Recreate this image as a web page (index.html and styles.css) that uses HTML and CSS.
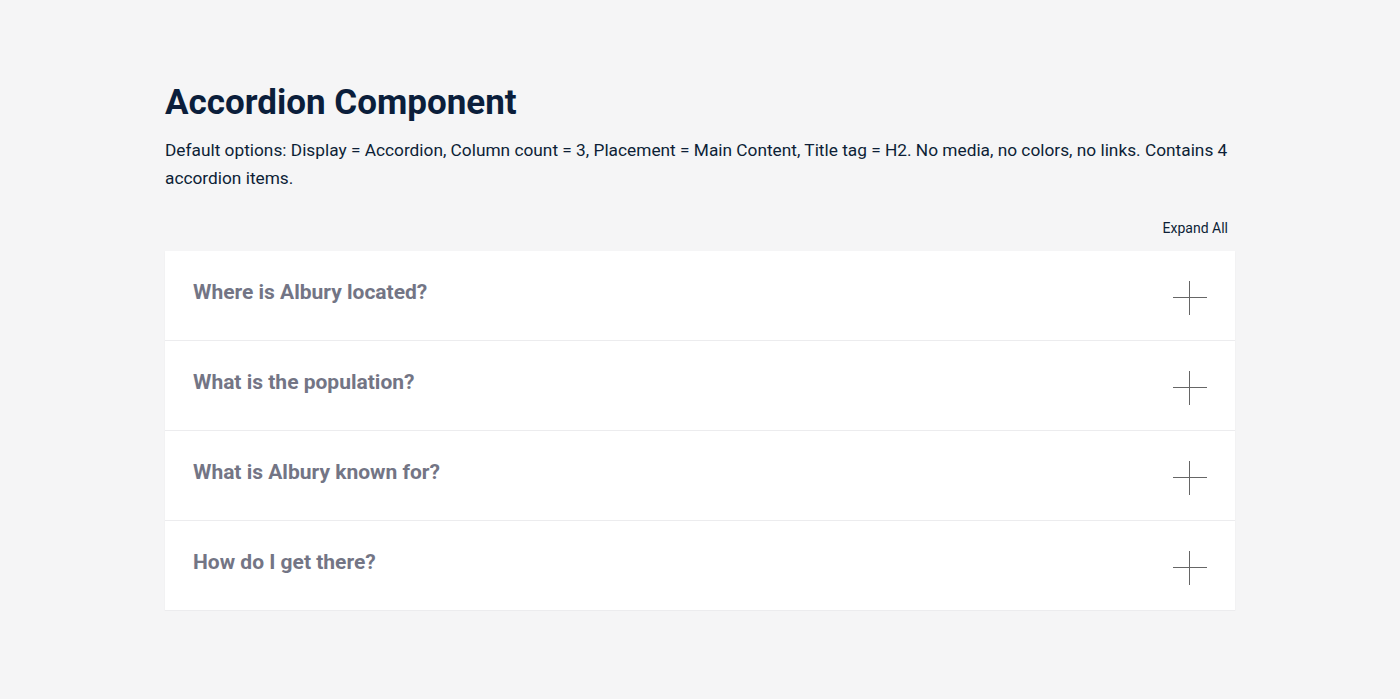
FILE: index.html
```html
<!DOCTYPE html>
<html lang="en">
<head>
    <meta charset="UTF-8">
    <meta name="viewport" content="width=device-width, initial-scale=1.0">
    <title>Accordion Component</title>
    <link rel="stylesheet" href="styles.css">
</head>
<body>

<div class="page">
    <h1 class="title">Accordion Component</h1>
    <p class="intro">Default options: Display = Accordion, Column count = 3, Placement = Main Content, Title tag = H2. No media, no colors, no links. Contains 4 accordion items.</p>

    <div class="toolbar">
        <button class="expand-all">Expand All</button>
    </div>

    <div class="accordion">
        <!-- Accordion items -->
        <div class="item">
            <h2 class="item-title">Where is Albury located?</h2>
            <span class="plus"></span>
        </div>
        <div class="item">
            <h2 class="item-title">What is the population?</h2>
            <span class="plus"></span>
        </div>
        <div class="item">
            <h2 class="item-title">What is Albury known for?</h2>
            <span class="plus"></span>
        </div>
        <div class="item">
            <h2 class="item-title">How do I get there?</h2>
            <span class="plus"></span>
        </div>
    </div>
</div>

</body>
</html>
```

FILE: styles.css
```css
/* Basic page styling */
body {
    margin: 0;
    font-family: Roboto, "Liberation Sans", sans-serif;
    background-color: #f5f5f6;
    color: #0d1f36;
}
.page {
    max-width: 1070px;
    margin: 0 auto;
    padding-top: 81px;
}
.title {
    margin: 0;
    font-size: 35px;
    line-height: 44px;
    font-weight: 700;
    color: #0b1e3b;
}
.intro {
    margin: 11px 0 0;
    font-size: 17.3px;
    line-height: 28px;
}
.toolbar {
    display: flex;
    justify-content: flex-end;
    margin-top: 26px;
    padding-right: 7px;
}
.expand-all {
    border: none;
    background: none;
    padding: 0;
    font-family: inherit;
    font-size: 14px;
    line-height: 20px;
    color: #0d1f36;
    cursor: pointer;
}
.accordion {
    margin-top: 13px;
    background-color: #fff;
    box-shadow: 0 1px 2px rgba(0, 0, 0, 0.04);
}
.item {
    display: flex;
    align-items: center;
    justify-content: space-between;
    height: 89px;
    padding: 0 28px;
    border-bottom: 1px solid #ececee;
}
.item-title {
    margin: 0 0 7px;
    font-size: 21px;
    font-weight: 700;
    color: #737585;
}
.plus {
    position: relative;
    width: 34px;
    height: 34px;
    margin-top: 4px;
}
.plus::before,
.plus::after {
    content: "";
    position: absolute;
    background-color: #666;
}
.plus::before {
    left: 0;
    right: 0;
    top: 16px;
    height: 1px;
}
.plus::after {
    top: 0;
    bottom: 0;
    left: 16px;
    width: 1px;
}
```
